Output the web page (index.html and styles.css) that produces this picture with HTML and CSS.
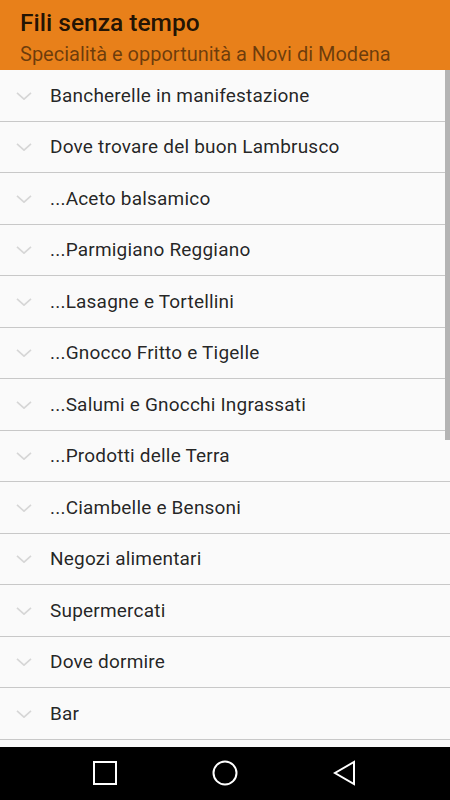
FILE: index.html
```html
<!DOCTYPE html>
<html lang="it">
<head>
<meta charset="utf-8">
<title>Fili senza tempo</title>
<link rel="stylesheet" href="styles.css">
</head>
<body>
<div class="screen">
  <header class="appbar">
    <div class="title">Fili senza tempo</div>
    <div class="subtitle">Specialità e opportunità a Novi di Modena</div>
  </header>
  <div class="list-wrap">
    <ul class="list">
      <li class="row"><svg class="chev" viewBox="0 0 16 8"><path d="M1 0.8 L8 7.2 L15 0.8"/></svg><span>Bancherelle in manifestazione</span></li>
      <li class="row"><svg class="chev" viewBox="0 0 16 8"><path d="M1 0.8 L8 7.2 L15 0.8"/></svg><span>Dove trovare del buon Lambrusco</span></li>
      <li class="row"><svg class="chev" viewBox="0 0 16 8"><path d="M1 0.8 L8 7.2 L15 0.8"/></svg><span>...Aceto balsamico</span></li>
      <li class="row"><svg class="chev" viewBox="0 0 16 8"><path d="M1 0.8 L8 7.2 L15 0.8"/></svg><span>...Parmigiano Reggiano</span></li>
      <li class="row"><svg class="chev" viewBox="0 0 16 8"><path d="M1 0.8 L8 7.2 L15 0.8"/></svg><span>...Lasagne e Tortellini</span></li>
      <li class="row"><svg class="chev" viewBox="0 0 16 8"><path d="M1 0.8 L8 7.2 L15 0.8"/></svg><span>...Gnocco Fritto e Tigelle</span></li>
      <li class="row"><svg class="chev" viewBox="0 0 16 8"><path d="M1 0.8 L8 7.2 L15 0.8"/></svg><span>...Salumi e Gnocchi Ingrassati</span></li>
      <li class="row"><svg class="chev" viewBox="0 0 16 8"><path d="M1 0.8 L8 7.2 L15 0.8"/></svg><span>...Prodotti delle Terra</span></li>
      <li class="row"><svg class="chev" viewBox="0 0 16 8"><path d="M1 0.8 L8 7.2 L15 0.8"/></svg><span>...Ciambelle e Bensoni</span></li>
      <li class="row"><svg class="chev" viewBox="0 0 16 8"><path d="M1 0.8 L8 7.2 L15 0.8"/></svg><span>Negozi alimentari</span></li>
      <li class="row"><svg class="chev" viewBox="0 0 16 8"><path d="M1 0.8 L8 7.2 L15 0.8"/></svg><span>Supermercati</span></li>
      <li class="row"><svg class="chev" viewBox="0 0 16 8"><path d="M1 0.8 L8 7.2 L15 0.8"/></svg><span>Dove dormire</span></li>
      <li class="row"><svg class="chev" viewBox="0 0 16 8"><path d="M1 0.8 L8 7.2 L15 0.8"/></svg><span>Bar</span></li>
    </ul>
    <div class="scrollbar"></div>
  </div>
  <nav class="navbar">
    <svg class="nav-icon" viewBox="0 0 26 26"><rect x="2" y="2" width="22" height="22"/></svg>
    <svg class="nav-icon" viewBox="0 0 26 26"><circle cx="13" cy="13" r="11.5"/></svg>
    <svg class="nav-icon" viewBox="0 0 26 26"><path d="M22 2 L22 24 L3 13 Z"/></svg>
  </nav>
</div>
</body>
</html>
```

FILE: styles.css
```css
* { box-sizing: border-box; }
html, body { margin: 0; padding: 0; }
body {
  font-family: Roboto, "Noto Sans", "Liberation Sans", sans-serif;
  background: #000;
}
.screen {
  width: 450px;
  height: 800px;
  display: flex;
  flex-direction: column;
  overflow: hidden;
  background: #fafafa;
}
.appbar {
  height: 70px;
  flex: none;
  background: #e8801a;
  padding: 8px 20px 0 20px;
}
.title {
  font-size: 24.5px;
  font-weight: 500;
  line-height: 30px;
  color: rgba(0,0,0,0.87);
}
.subtitle {
  font-size: 20px;
  line-height: 24px;
  margin-top: 4px;
  white-space: nowrap;
  color: rgba(0,0,0,0.54);
}
.list-wrap {
  flex: 1;
  position: relative;
  overflow: hidden;
  background: #fafafa;
}
.list {
  list-style: none;
  margin: 0;
  padding: 0;
}
.row {
  height: 51.5px;
  border-bottom: 1px solid #c8c8c8;
  display: flex;
  align-items: center;
  padding-left: 16px;
  font-size: 19px;
  letter-spacing: 0.2px;
  color: rgba(0,0,0,0.87);
}
.chev {
  width: 16px;
  height: 8px;
  margin-right: 18px;
  margin-top: 1px;
  fill: none;
  stroke: #d6d6d6;
  stroke-width: 1.6;
}
.scrollbar {
  position: absolute;
  top: 0;
  right: 0;
  width: 5px;
  height: 370px;
  background: #b4b4b4;
}
.navbar {
  height: 53px;
  flex: none;
  background: #000;
  display: flex;
  align-items: center;
  justify-content: center;
  gap: 94px;
  padding-bottom: 1px;
}
.nav-icon {
  width: 26px;
  height: 26px;
  fill: none;
  stroke: #fff;
  stroke-width: 2;
}
```
